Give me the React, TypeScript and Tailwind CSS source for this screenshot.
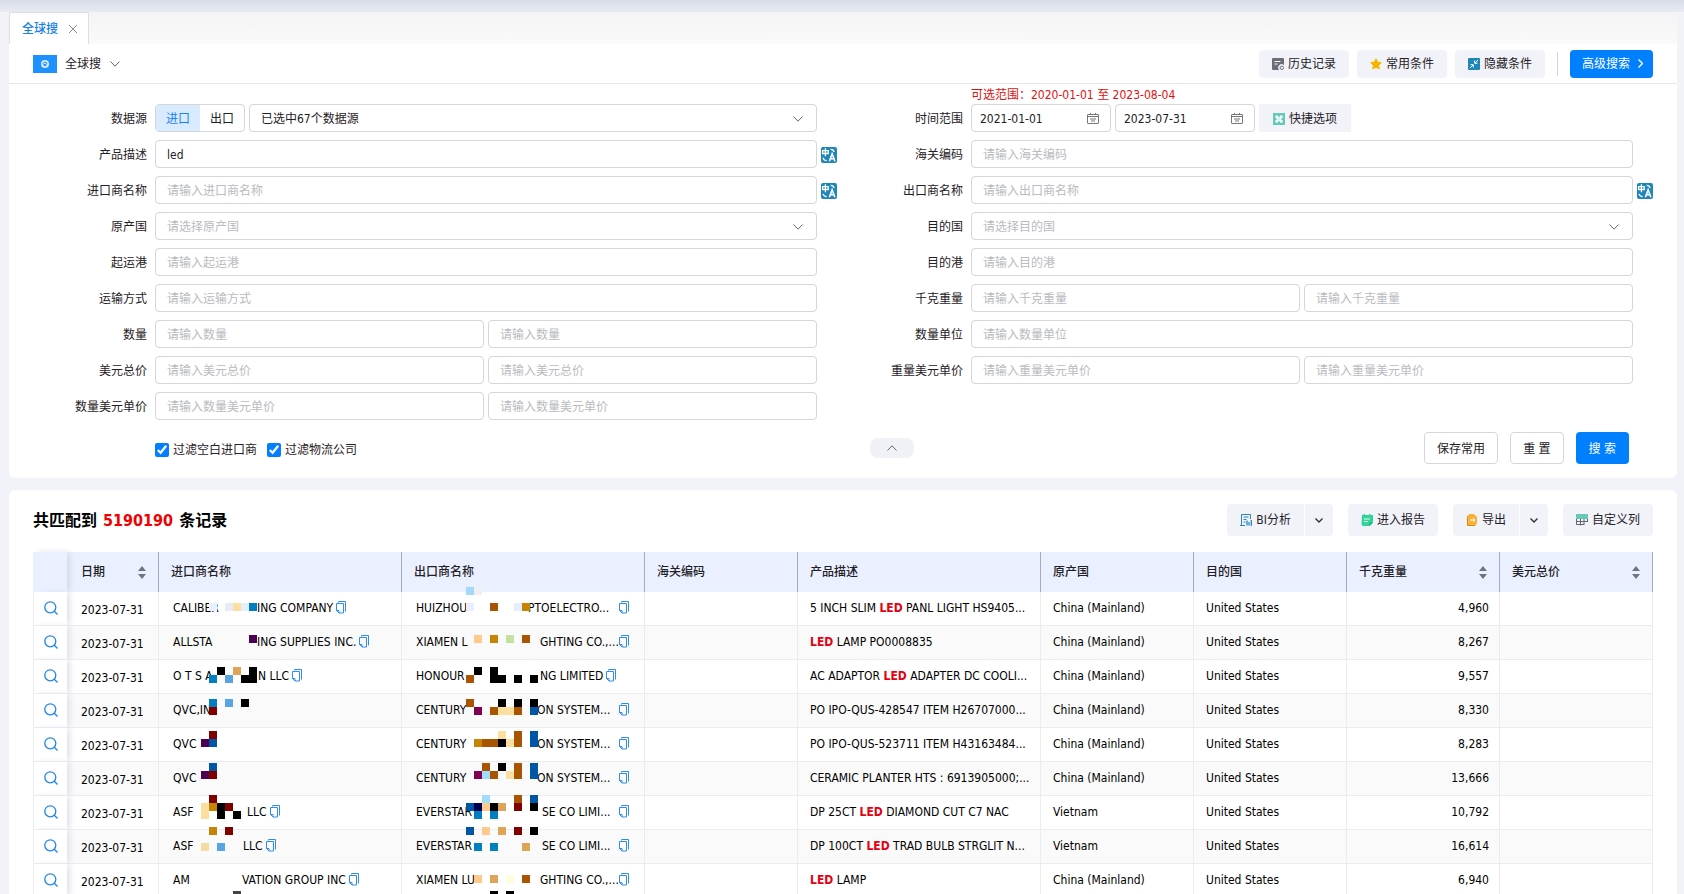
import { useState, type ReactNode } from "react";
import clsx from "clsx";

type Field = {
  id: string;
  label: string;
  kind?: "text" | "select" | "range";
  placeholder?: string;
  value?: string;
  translate?: boolean;
};

type Company = {
  head: string;
  // width of the visible start plus the masked part
  headWidth: number;
  tail: string;
  cut?: boolean;
  copy?: boolean;
};

type Row = {
  importer: Company;
  exporter: Company;
  product: string;
  origin: string;
  weight: string;
};

const LEFT_FIELDS: Field[] = [
  { id: "product", label: "产品描述", value: "led", translate: true },
  { id: "importer", label: "进口商名称", placeholder: "请输入进口商名称", translate: true },
  { id: "origin", label: "原产国", kind: "select", placeholder: "请选择原产国" },
  { id: "loading-port", label: "起运港", placeholder: "请输入起运港" },
  { id: "transport", label: "运输方式", placeholder: "请输入运输方式" },
  { id: "quantity", label: "数量", kind: "range", placeholder: "请输入数量" },
  { id: "usd-total", label: "美元总价", kind: "range", placeholder: "请输入美元总价" },
  { id: "usd-unit", label: "数量美元单价", kind: "range", placeholder: "请输入数量美元单价" },
];

const RIGHT_FIELDS: Field[] = [
  { id: "hs-code", label: "海关编码", placeholder: "请输入海关编码" },
  { id: "exporter", label: "出口商名称", placeholder: "请输入出口商名称", translate: true },
  { id: "destination", label: "目的国", kind: "select", placeholder: "请选择目的国" },
  { id: "unloading-port", label: "目的港", placeholder: "请输入目的港" },
  { id: "weight", label: "千克重量", kind: "range", placeholder: "请输入千克重量" },
  { id: "quantity-unit", label: "数量单位", placeholder: "请输入数量单位" },
  { id: "weight-unit-price", label: "重量美元单价", kind: "range", placeholder: "请输入重量美元单价" },
];

const COLUMNS: { title: string; width: string; sortable?: boolean }[] = [
  { title: "日期", width: "w-[92px]", sortable: true },
  { title: "进口商名称", width: "w-[243px]" },
  { title: "出口商名称", width: "w-[243px]" },
  { title: "海关编码", width: "w-[153px]" },
  { title: "产品描述", width: "w-[243px]" },
  { title: "原产国", width: "w-[153px]" },
  { title: "目的国", width: "w-[153px]" },
  { title: "千克重量", width: "w-[153px]", sortable: true },
  { title: "美元总价", width: "w-[153px]", sortable: true },
];

const ROWS: Row[] = [
  {
    importer: { head: "CALIBER", headWidth: 84, tail: "ING COMPANY", copy: true },
    exporter: { head: "HUIZHOU", headWidth: 112, tail: "PTOELECTRO...", cut: true, copy: true },
    product: "5 INCH SLIM LED PANL LIGHT HS9405...",
    origin: "China (Mainland)",
    weight: "4,960",
  },
  {
    importer: { head: "ALLSTA", headWidth: 84, tail: "ING SUPPLIES INC.", copy: true },
    exporter: { head: "XIAMEN L", headWidth: 124, tail: "GHTING CO.,...", cut: true, copy: true },
    product: "LED LAMP PO0008835",
    origin: "China (Mainland)",
    weight: "8,267",
  },
  {
    importer: { head: "O T S A", headWidth: 85, tail: "N LLC", copy: true },
    exporter: { head: "HONOUR", headWidth: 124, tail: "NG LIMITED", copy: true },
    product: "AC ADAPTOR LED ADAPTER DC COOLI...",
    origin: "China (Mainland)",
    weight: "9,557",
  },
  {
    importer: { head: "QVC,IN", headWidth: 84, tail: "" },
    exporter: { head: "CENTURY", headWidth: 121, tail: "ON SYSTEM...", cut: true, copy: true },
    product: "PO IPO-QUS-428547 ITEM H26707000...",
    origin: "China (Mainland)",
    weight: "8,330",
  },
  {
    importer: { head: "QVC", headWidth: 84, tail: "" },
    exporter: { head: "CENTURY", headWidth: 121, tail: "ON SYSTEM...", cut: true, copy: true },
    product: "PO IPO-QUS-523711 ITEM H43163484...",
    origin: "China (Mainland)",
    weight: "8,283",
  },
  {
    importer: { head: "QVC", headWidth: 84, tail: "" },
    exporter: { head: "CENTURY", headWidth: 121, tail: "ON SYSTEM...", cut: true, copy: true },
    product: "CERAMIC PLANTER HTS : 6913905000;...",
    origin: "China (Mainland)",
    weight: "13,666",
  },
  {
    importer: { head: "ASF", headWidth: 74, tail: "LLC", copy: true },
    exporter: { head: "EVERSTAR", headWidth: 126, tail: "SE CO LIMI...", cut: true, copy: true },
    product: "DP 25CT LED DIAMOND CUT C7 NAC",
    origin: "Vietnam",
    weight: "10,792",
  },
  {
    importer: { head: "ASF", headWidth: 70, tail: "LLC", copy: true },
    exporter: { head: "EVERSTAR", headWidth: 126, tail: "SE CO LIMI...", cut: true, copy: true },
    product: "DP 100CT LED TRAD BULB STRGLIT N...",
    origin: "Vietnam",
    weight: "16,614",
  },
  {
    importer: { head: "AM", headWidth: 69, tail: "VATION GROUP INC", copy: true },
    exporter: { head: "XIAMEN LU", headWidth: 124, tail: "GHTING CO.,...", cut: true, copy: true },
    product: "LED LAMP",
    origin: "China (Mainland)",
    weight: "6,940",
  },
];

// Mosaic blocks: [column, row, colour], one unit is 8px
type Block = [number, number, string];

const IMPORTER_MASK: Block[] = [
  [1, 2, "#e9effb"], [3, 2, "#e6ebf7"], [4, 2, "#fbdf9f"], [5, 2, "#e4eeff"], [6, 2, "#0080c0"],
  [6, 6, "#4b0052"],
  [2, 10, "#000"], [4, 10, "#e0a458"], [6, 10, "#000"],
  [1, 11, "#0080c0"], [3, 11, "#57a4e4"], [5, 11, "#000"], [6, 11, "#000"],
  [1, 14, "#0080c0"], [3, 14, "#57a4e4"], [5, 14, "#000"], [1, 15, "#800000"],
  [1, 18, "#800000"], [0, 19, "#4b0052"], [1, 19, "#0055a5"],
  [1, 22, "#0055a5"], [0, 23, "#4b0052"], [1, 23, "#800000"],
  [1, 26, "#800000"],
  [0, 27, "#fbdf9f"], [1, 27, "#c68404"], [2, 27, "#000"], [3, 27, "#800000"],
  [0, 28, "#fbdf9f"], [2, 28, "#000"], [4, 28, "#000"],
  [1, 30, "#c68404"], [3, 30, "#800000"],
  [0, 32, "#f5dca0"], [2, 32, "#57a4e4"],
  [4, 38, "#444"],
];

const EXPORTER_MASK: Block[] = [
  [0, 0, "#a5d8fb"], [1, 0, "#f0f0f2"],
  [0, 2, "#e8eefc"], [3, 2, "#a85400"], [6, 2, "#e4eeff"], [7, 2, "#c68404"],
  [1, 6, "#fdc98c"], [3, 6, "#c68404"], [5, 6, "#c4e0a2"], [7, 6, "#a85400"],
  [1, 10, "#000"], [3, 10, "#000"],
  [0, 11, "#a85400"], [3, 11, "#000"], [4, 11, "#000"], [6, 11, "#000"], [8, 11, "#000"],
  [0, 14, "#a85400"], [4, 14, "#000"], [6, 14, "#000"], [8, 14, "#000"],
  [1, 15, "#800050"], [3, 15, "#a85400"], [4, 15, "#fbdf9f"], [5, 15, "#fbdf9f"], [6, 15, "#a85400"], [8, 15, "#0055a5"],
  [4, 18, "#fbdf9f"], [6, 18, "#a85400"], [8, 18, "#0055a5"],
  [1, 19, "#c68404"], [2, 19, "#a85400"], [3, 19, "#a85400"], [4, 19, "#000"], [5, 19, "#fbdf9f"], [6, 19, "#a85400"], [8, 19, "#0055a5"],
  [2, 22, "#a85400"], [4, 22, "#000"], [6, 22, "#a85400"], [8, 22, "#0055a5"],
  [1, 23, "#800050"], [2, 23, "#a0dcfb"], [3, 23, "#a85400"], [5, 23, "#fbdf9f"], [6, 23, "#a85400"], [8, 23, "#0055a5"],
  [2, 26, "#a0dcfb"], [6, 26, "#a85400"], [8, 26, "#0055a5"],
  [0, 27, "#0055a5"], [1, 27, "#000052"], [2, 27, "#fdc98c"], [3, 27, "#000"], [4, 27, "#e0a458"], [6, 27, "#800000"], [8, 27, "#000"],
  [1, 28, "#0080c0"], [3, 28, "#0080c0"],
  [0, 30, "#0055a5"], [2, 30, "#fdc98c"], [4, 30, "#e0a458"], [6, 30, "#800000"], [8, 30, "#000"],
  [1, 32, "#0080c0"], [3, 32, "#0080c0"], [7, 32, "#dca654"],
  [1, 36, "#fdc98c"], [3, 36, "#e0a458"], [5, 36, "#fffde0"], [7, 36, "#a85400"],
  [3, 38, "#000"], [5, 38, "#000"],
];

function Mosaic({ blocks }: { blocks: Block[] }) {
  return (
    <svg
      width="80"
      height="312"
      viewBox="0 0 80 312"
      shapeRendering="crispEdges"
      className={clsx(
        "pointer-events-none absolute top-[35px] z-10",
        blocks === IMPORTER_MASK ? "left-[42px]" : "left-16",
      )}
      aria-hidden="true"
    >
      {blocks.map(([x, y, fill]) => (
        <rect key={`${x}-${y}`} x={x * 8} y={y * 8} width="8" height="8" fill={fill} />
      ))}
    </svg>
  );
}

function Chevron({ className, up }: { className?: string; up?: boolean }) {
  return (
    <svg width="10" height="6" viewBox="0 0 10 6" fill="none" stroke="currentColor" className={className} aria-hidden="true">
      <path d={up ? "M.5 5.5 5 .8l4.500 4.700" : "M.5.5 5 5.200 9.500.5"} />
    </svg>
  );
}

function HistoryIcon() {
  return (
    <svg width="12" height="12" viewBox="0 0 12 12" aria-hidden="true">
      <path fill="#6b6d78" d="M1 0h10a1 1 0 0 1 1 1v6.200A3 3 0 0 0 7.200 12H1a1 1 0 0 1-1-1V1a1 1 0 0 1 1-1Z" />
      <path stroke="#fff" d="M2.500 3.500h6M2.500 6h3" />
      <circle cx="9.800" cy="9.800" r="1.700" fill="none" stroke="#6b6d78" />
    </svg>
  );
}

function StarIcon() {
  return (
    <svg width="12" height="12" viewBox="0 0 12 12" aria-hidden="true">
      <path
        fill="#f7b500"
        stroke="#f7b500"
        strokeLinejoin="round"
        d="m6 .8 1.600 3.300 3.700.5-2.700 2.600.7 3.700L6 9.200l-3.300 1.700.7-3.700L.7 4.600l3.700-.5Z"
      />
    </svg>
  );
}

function CollapseIcon() {
  return (
    <svg width="12" height="12" viewBox="0 0 12 12" fill="none" aria-hidden="true">
      <rect width="12" height="12" rx="1" fill="#1f86b8" />
      <path stroke="#fff" d="M10 2 7 5M6.700 2.500v2.800h2.800M2 10l3-3M2.500 6.700h2.800v2.800" />
    </svg>
  );
}

function CommandIcon() {
  return (
    <svg width="12" height="12" viewBox="0 0 12 12" fill="none" aria-hidden="true">
      <rect width="12" height="12" fill="#66c9b8" />
      <path
        stroke="#fff"
        strokeWidth="1.200"
        d="M4.800 4.800h2.400v2.400H4.800zM4.800 4.800h-1a1 1 0 1 1 1-1zM7.200 4.800v-1a1 1 0 1 1 1 1zM7.200 7.200h1a1 1 0 1 1-1 1zM4.800 7.200v1a1 1 0 1 1-1-1z"
      />
    </svg>
  );
}

function CalendarIcon() {
  return (
    <svg width="12" height="11" viewBox="0 0 12 11" fill="none" stroke="#74777e" className="shrink-0" aria-hidden="true">
      <rect x=".5" y="1.500" width="11" height="9" rx=".5" />
      <path d="M1 3.500h10M3.500 0v1.500M8.500 0v1.500M3 6h6M4 8h4" />
    </svg>
  );
}

function TranslateIcon() {
  return (
    <svg width="16" height="16" viewBox="0 0 16 16" fill="none" aria-hidden="true">
      <rect width="16" height="16" rx="2" fill="#1f86b8" />
      <path stroke="#fff" strokeWidth="1.300" d="M1.600 3.600h5.600v2.900H1.600zM4.400 1.300v8" />
      <path stroke="#fff" strokeWidth="1.600" d="m8.400 14.200 2.700-7.400 2.800 7.400M9.300 11.800H13" />
      <path stroke="#fff" strokeWidth="1.300" d="M9.600 2.400c2 0 3.200.7 3.400 2.600M2.200 10.800c.2 1.800 1.400 2.800 3.500 2.800" />
    </svg>
  );
}

function BiIcon() {
  return (
    <svg width="12" height="12" viewBox="0 0 12 12" fill="none" stroke="#2b87bd" aria-hidden="true">
      <path d="M10.500 5V.5h-9v11H5M0 11.500h3M3.500 3h5M3.500 5.500h3M3.500 8h2" />
      <path d="M7 6.500v5M9 8v3.500M11.300 6v6" strokeWidth="1.300" />
    </svg>
  );
}

function ReportIcon() {
  return (
    <svg width="12" height="12" viewBox="0 0 12 12" fill="none" aria-hidden="true">
      <path fill="#36d399" d="M1 1h1.500V0H4v1h4V0h1.500v1H12v7.500L8.500 12H2a2 2 0 0 1-1.500-2Z" />
      <path stroke="#d9fff0" d="M3 5h6M3 7.500h4" />
      <path fill="#1aa97a" d="M8.500 12V8.500H12Z" />
    </svg>
  );
}

function ExportIcon() {
  return (
    <svg width="12" height="12" viewBox="0 0 12 12" fill="none" aria-hidden="true">
      <path fill="#d98a0b" d="M1 2.500 2.500 1v9.500H10L9 12H2a1 1 0 0 1-1-1Z" />
      <path fill="#fbb034" d="M2.500 1a1 1 0 0 1 1-1H8l3 3v6.500a1 1 0 0 1-1 1H2.500Z" />
      <path stroke="#fff" d="M4 6h5M7 4l2 2-2 2" />
    </svg>
  );
}

function ColumnsIcon() {
  return (
    <svg width="12" height="12" viewBox="0 0 12 12" fill="none" aria-hidden="true">
      <path fill="#66c9b8" d="M0 0h12v5H0z" />
      <path stroke="#62656f" d="M.5 5v5.500H8M4.500 5v6.500M8 5v6M0 7.500h12M11.500 5v3" />
    </svg>
  );
}

function CopyIcon() {
  return (
    <svg width="10" height="13" viewBox="0 0 10 13" fill="none" stroke="#2f8df0" aria-hidden="true">
      <path d="M2.500 1.500v-1h7v10" />
      <path d="M.5 2.500h7v9.500H3L.5 9.500zM.5 9.500H3V12" />
    </svg>
  );
}

function SearchIcon() {
  return (
    <svg width="14" height="14" viewBox="0 0 14 14" fill="none" stroke="#1f86f0" strokeWidth="1.300" aria-hidden="true">
      <circle cx="6.300" cy="6.300" r="5.500" />
      <path d="m10.300 10.300 3.200 3.200" />
    </svg>
  );
}

function SortIcon() {
  return (
    <svg width="8" height="13" viewBox="0 0 8 13" fill="#71747e" aria-hidden="true">
      <path d="M0 5h8L4 0zM0 8h8l-4 5z" />
    </svg>
  );
}

function ToolButton({ icon, children, tall }: { icon: ReactNode; children: ReactNode; tall?: boolean }) {
  return (
    <button
      type="button"
      className={clsx(
        "flex cursor-pointer items-center gap-1 rounded-sm bg-[#f2f3f9] px-[13px] hover:bg-[#e8eaf4]",
        tall ? "h-8" : "h-7",
      )}
    >
      {icon}
      {children}
    </button>
  );
}

function SplitButton({ icon, label }: { icon: ReactNode; label: string }) {
  return (
    <div className="flex gap-px">
      <button type="button" className="flex h-8 cursor-pointer items-center gap-1 rounded-l-sm bg-[#f2f3f9] px-[13px]">
        {icon}
        {label}
      </button>
      <button
        type="button"
        aria-label={`${label}更多`}
        className="flex h-8 w-7 cursor-pointer items-center justify-center rounded-r-sm bg-[#f2f3f9]"
      >
        <svg width="8" height="5" viewBox="0 0 8 5" fill="none" stroke="#333" strokeWidth="1.400" aria-hidden="true">
          <path d="m.5.5 3.500 3.500L7.500.5" />
        </svg>
      </button>
    </div>
  );
}

const CONTROL =
  "h-7 w-full min-w-0 rounded border border-[#d5d6d9] bg-white px-[11px] pt-0.5 outline-none placeholder:text-[#b9bbc0] focus:border-[#1a85ff]";

function SelectBox({ id, text, muted }: { id: string; text: string; muted?: boolean }) {
  return (
    <div className="relative min-w-0 flex-1">
      <select id={id} className={clsx(CONTROL, "appearance-none", muted && "text-[#b9bbc0]")}>
        <option>{text}</option>
      </select>
      <Chevron className="pointer-events-none absolute top-[12px] right-[14px] text-[#666]" />
    </div>
  );
}

function FormRow({ id, label, side, children }: { id: string; label: string; side?: ReactNode; children: ReactNode }) {
  return (
    <div className="flex items-center pr-[6px]">
      <label htmlFor={id} className="mr-2 w-[120px] shrink-0 pt-0.5 text-right">
        {label}
      </label>
      <div className="flex min-w-0 flex-1 gap-1">{children}</div>
      <div className="flex w-5 shrink-0 justify-end">{side}</div>
    </div>
  );
}

function FieldRow({ field }: { field: Field }) {
  const { id, label, kind, placeholder, value, translate } = field;
  return (
    <FormRow
      id={id}
      label={label}
      side={
        translate && (
          <button type="button" aria-label="翻译" className="cursor-pointer pt-px">
            <TranslateIcon />
          </button>
        )
      }
    >
      {kind === "select" ? (
        <SelectBox id={id} text={placeholder ?? ""} muted />
      ) : (
        <input id={id} type="text" defaultValue={value} placeholder={placeholder} className={CONTROL} />
      )}
      {kind === "range" && (
        <input type="text" aria-label={`${label}上限`} placeholder={placeholder} className={CONTROL} />
      )}
    </FormRow>
  );
}

function DateBox({ id, value, label }: { id: string; value: string; label?: string }) {
  return (
    <div className="flex h-7 w-[140px] items-center rounded border border-[#d5d6d9] pr-[11px] pl-2">
      <input id={id} type="text" aria-label={label} defaultValue={value} className="w-full min-w-0 pt-0.5 outline-none" />
      <CalendarIcon />
    </div>
  );
}

function CompanyCell({ company }: { company: Company }) {
  return (
    <div className="flex items-center gap-[3px] pl-px whitespace-nowrap">
      <span className={clsx("flex", company.cut && "w-[200px]")}>
        <span className="shrink-0" style={{ width: company.headWidth }}>
          {company.head}
        </span>
        {company.tail}
      </span>
      {company.copy && (
        <button type="button" aria-label="复制" className="shrink-0 cursor-pointer">
          <CopyIcon />
        </button>
      )}
    </div>
  );
}

function Highlight({ text }: { text: string }) {
  return (
    <>
      {text.split(/(LED)/).map((part, i) =>
        part === "LED" ? (
          <b key={i} className="font-bold text-[#e60012]">
            LED
          </b>
        ) : (
          part
        ),
      )}
    </>
  );
}

export default function App() {
  const [direction, setDirection] = useState<"进口" | "出口">("进口");
  const [expanded, setExpanded] = useState(true);

  return (
    <div className="h-screen overflow-hidden bg-[#f2f3f9] font-['DejaVu_Sans_Condensed','Noto_Sans_CJK_SC',sans-serif] text-xs text-[#1f2126]">
      <div className="h-3 bg-linear-to-b from-[#d8dce6] to-[#e8ebf2]" />

      <main className="mr-[7px] ml-[9px]">
        <div className="flex h-8 bg-linear-to-b from-[#f4f4f6] to-[#fafafa]">
          <div className="flex items-center gap-[10px] border border-b-0 border-[#dddfe4] bg-white pr-[10px] pl-3">
            <a href="#search" className="font-medium text-[#1a80e6]">
              全球搜
            </a>
            <button type="button" aria-label="关闭" className="cursor-pointer">
              <svg width="10" height="10" viewBox="0 0 10 10" stroke="#8b8d92" aria-hidden="true">
                <path d="m1 1 8 8M9 1 1 9" />
              </svg>
            </button>
          </div>
        </div>

        <section className="rounded-b-md bg-white">
          <header className="flex h-10 items-center border-b border-[#e6e7ea] px-6">
            <button type="button" className="flex cursor-pointer items-center">
              <svg width="24" height="18" viewBox="0 0 24 18" fill="none" aria-hidden="true">
                <path fill="#1e90ff" d="M0 0h24v18H0z" />
                <circle cx="12" cy="9" r="4" fill="#d5eaff" />
                <path stroke="#1e90ff" d="M9.500 8.500 12 7l2 1-1 1.500h-2.500L12 11l1.500-1" />
              </svg>
              <span className="mr-[9px] ml-2">全球搜</span>
              <Chevron className="text-[#666]" />
            </button>
            <div className="ml-auto flex items-center gap-2">
              <ToolButton icon={<HistoryIcon />}>历史记录</ToolButton>
              <ToolButton icon={<StarIcon />}>常用条件</ToolButton>
              <ToolButton icon={<CollapseIcon />}>隐藏条件</ToolButton>
              <span className="mx-1 h-6 w-px bg-[#d3d4d8]" />
              <button
                type="button"
                className="flex h-7 cursor-pointer items-center gap-2 rounded bg-[#0080ff] pr-[10px] pl-3 text-white"
              >
                高级搜索
                <svg width="5" height="9" viewBox="0 0 5 9" fill="none" stroke="#fff" strokeWidth="1.400" aria-hidden="true">
                  <path d="m.5.5 4 4-4 4" />
                </svg>
              </button>
            </div>
          </header>

          <form className="px-[18px] pb-[14px]" onSubmit={(e) => e.preventDefault()}>
            <div className="grid grid-cols-2">
              <div className="flex flex-col gap-2 pt-5">
                <FormRow id="source" label="数据源">
                  <div className="flex shrink-0 overflow-hidden rounded border border-[#d5d6d9]">
                    {(["进口", "出口"] as const).map((d) => (
                      <button
                        key={d}
                        type="button"
                        onClick={() => setDirection(d)}
                        className={clsx(
                          "h-[26px] w-11 cursor-pointer pt-0.5",
                          d === direction && "bg-[#d9ecff] text-[#1a80ff]",
                        )}
                      >
                        {d}
                      </button>
                    ))}
                  </div>
                  <SelectBox id="source" text="已选中67个数据源" />
                </FormRow>
                {LEFT_FIELDS.map((f) => (
                  <FieldRow key={f.id} field={f} />
                ))}
              </div>

              <div className="flex flex-col gap-2">
                <div>
                  <p className="h-5 pt-[3px] pl-32 leading-4 text-[#e01010]">可选范围：2020-01-01 至 2023-08-04</p>
                  <FormRow id="date-from" label="时间范围">
                    <DateBox id="date-from" value="2021-01-01" />
                    <DateBox id="date-to" value="2023-07-31" label="结束日期" />
                    <button
                      type="button"
                      className="flex h-7 cursor-pointer items-center gap-1 bg-[#f2f3f9] px-[14px] pt-0.5"
                    >
                      <CommandIcon />
                      快捷选项
                    </button>
                  </FormRow>
                </div>
                {RIGHT_FIELDS.map((f) => (
                  <FieldRow key={f.id} field={f} />
                ))}
              </div>
            </div>

            <div className="mt-3 grid grid-cols-2 items-center">
              <div className="flex items-center gap-[10px] pt-1 pl-32">
                {["过滤空白进口商", "过滤物流公司"].map((text) => (
                  <label key={text} className="flex items-center gap-1">
                    <input type="checkbox" defaultChecked className="size-[14px] accent-[#0080ff]" />
                    {text}
                  </label>
                ))}
              </div>
              <div className="flex items-center gap-3 pr-[30px] pl-[27px]">
                <button
                  type="button"
                  aria-label={expanded ? "收起" : "展开"}
                  onClick={() => setExpanded(!expanded)}
                  className="mr-auto flex h-5 w-11 cursor-pointer items-center justify-center rounded-lg bg-[#f0f1f6] text-[#666]"
                >
                  <Chevron up={expanded} />
                </button>
                <button type="button" className="h-8 cursor-pointer rounded border border-[#d5d6d9] px-3 pt-0.5">
                  保存常用
                </button>
                <button type="button" className="h-8 cursor-pointer rounded border border-[#d5d6d9] px-3 pt-0.5">
                  重 置
                </button>
                <button type="submit" className="h-8 cursor-pointer rounded bg-[#0080ff] px-[13px] pt-0.5 text-white">
                  搜 索
                </button>
              </div>
            </div>
          </form>
        </section>

        <section className="mt-3 rounded-t-md bg-white px-6 pt-[14px]">
          <div className="mb-4 flex items-center">
            <h2 className="pt-0.5 text-base font-bold text-black">
              共匹配到 <span className="mx-px text-[#f00000]">5190190</span> 条记录
            </h2>
            <div className="ml-auto flex gap-[15px]">
              <SplitButton icon={<BiIcon />} label="BI分析" />
              <ToolButton tall icon={<ReportIcon />}>
                进入报告
              </ToolButton>
              <SplitButton icon={<ExportIcon />} label="导出" />
              <ToolButton tall icon={<ColumnsIcon />}>
                自定义列
              </ToolButton>
            </div>
          </div>

          <table className="w-full table-fixed border-separate border-spacing-0 text-left">
            <thead>
              <tr className="h-10 bg-[#eaf0ff]">
                <th className="relative w-[34px] shadow-[4px_0_6px_-1px_#d5d8e6]" />
                {COLUMNS.map((col, i) => (
                  <th
                    key={col.title}
                    className={clsx("relative border-r border-[#a6abba] pr-3", i === 0 ? "pl-[14px]" : "pl-3", col.width)}
                  >
                    <div className="flex items-center justify-between font-medium">
                      {col.title}
                      {col.sortable && <SortIcon />}
                    </div>
                    {col.title === "进口商名称" && <Mosaic blocks={IMPORTER_MASK} />}
                    {col.title === "出口商名称" && <Mosaic blocks={EXPORTER_MASK} />}
                  </th>
                ))}
              </tr>
            </thead>
            <tbody className="text-black [&_td]:border-b [&_td]:border-[#ebecee] [&_td+td]:border-r">
              {ROWS.map((row, i) => (
                <tr key={i} className="h-[34px] odd:bg-white even:bg-[#fafafa]">
                  <td className="relative border-l bg-white pb-0.5 pl-px text-center shadow-[4px_0_6px_-1px_#dfe1ec]">
                    <button type="button" aria-label="查看" className="cursor-pointer align-middle">
                      <SearchIcon />
                    </button>
                  </td>
                  <td className="pt-[3px] pl-[14px]">2023-07-31</td>
                  <td className="pb-0.5 pl-[13px]">
                    <CompanyCell company={row.importer} />
                  </td>
                  <td className="pb-0.5 pl-[13px]">
                    <CompanyCell company={row.exporter} />
                  </td>
                  <td />
                  <td className="pb-0.5 pl-3 whitespace-nowrap">
                    <Highlight text={row.product} />
                  </td>
                  <td className="pb-0.5 pl-3">{row.origin}</td>
                  <td className="pb-0.5 pl-3">United States</td>
                  <td className="pr-[10px] pb-0.5 text-right">{row.weight}</td>
                  <td />
                </tr>
              ))}
            </tbody>
          </table>
        </section>
      </main>
    </div>
  );
}
